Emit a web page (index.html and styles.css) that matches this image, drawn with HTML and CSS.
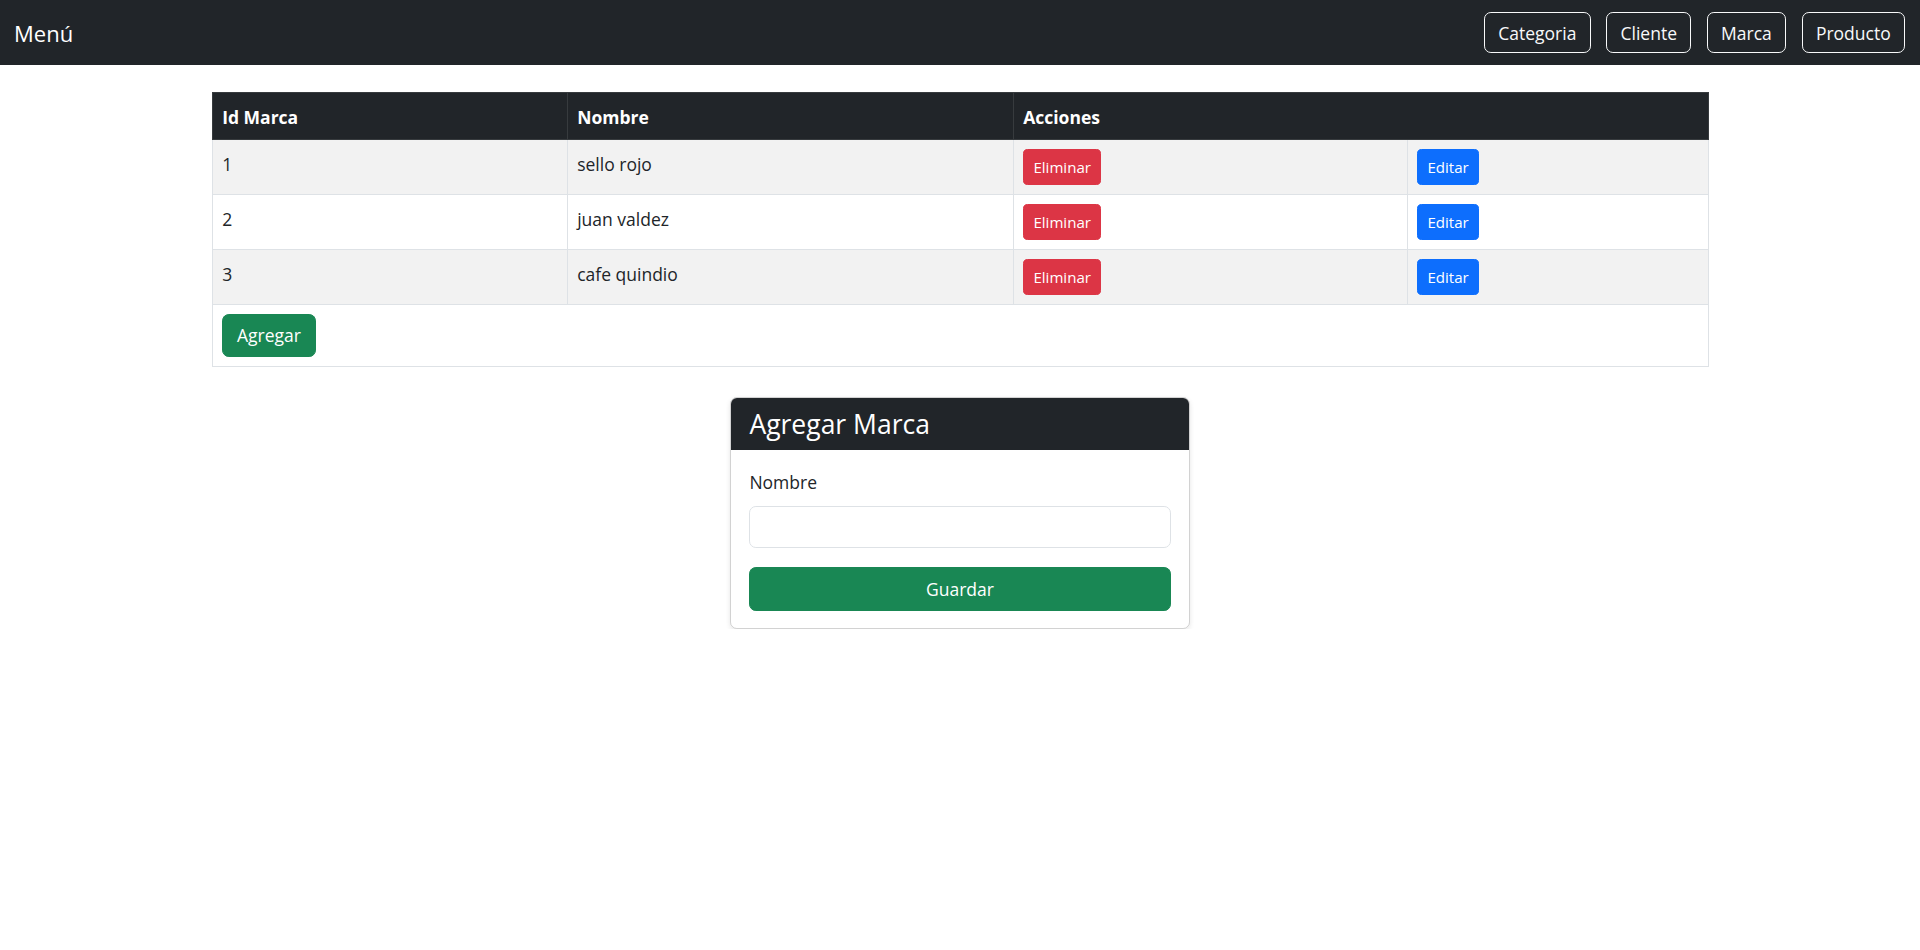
FILE: index.html
```html
<!DOCTYPE html>
<html lang="es">
<head>
<meta charset="utf-8">
<title>Marcas</title>
<link rel="stylesheet" href="styles.css">
</head>
<body>
<nav class="navbar">
  <a class="brand" href="#">Menú</a>
  <div class="nav-links">
    <a class="btn btn-outline" href="#">Categoria</a>
    <a class="btn btn-outline" href="#">Cliente</a>
    <a class="btn btn-outline" href="#">Marca</a>
    <a class="btn btn-outline" href="#">Producto</a>
  </div>
</nav>
<main class="container">
  <table class="table">
    <colgroup>
      <col class="c1"><col class="c2"><col class="c3"><col class="c4">
    </colgroup>
    <thead>
      <tr><th>Id Marca</th><th>Nombre</th><th colspan="2">Acciones</th></tr>
    </thead>
    <tbody>
      <tr class="odd"><td>1</td><td>sello rojo</td><td class="actions"><button class="btn btn-sm btn-danger">Eliminar</button></td><td class="actions"><button class="btn btn-sm btn-primary">Editar</button></td></tr>
      <tr><td>2</td><td>juan valdez</td><td class="actions"><button class="btn btn-sm btn-danger">Eliminar</button></td><td class="actions"><button class="btn btn-sm btn-primary">Editar</button></td></tr>
      <tr class="odd"><td>3</td><td>cafe quindio</td><td class="actions"><button class="btn btn-sm btn-danger">Eliminar</button></td><td class="actions"><button class="btn btn-sm btn-primary">Editar</button></td></tr>
    </tbody>
    <tfoot>
      <tr><td class="actions" colspan="4"><button class="btn btn-lg-ish btn-success">Agregar</button></td></tr>
    </tfoot>
  </table>

  <section class="card">
    <h3 class="card-header">Agregar Marca</h3>
    <form class="card-body">
      <label class="form-label" for="nombre">Nombre</label>
      <input class="form-control" id="nombre" type="text">
      <button class="btn btn-success btn-block" type="button">Guardar</button>
    </form>
  </section>
</main>
</body>
</html>
```
FILE: styles.css
```css
* { box-sizing: border-box; }
body {
  margin: 0;
  font-family: "Open Sans", "Noto Sans", sans-serif;
  font-size: 17.5px;
  line-height: 27.6px;
  color: #212529;
  background: #fff;
}
.navbar {
  background: #212529;
  height: 65px;
  display: flex;
  align-items: center;
  justify-content: space-between;
  padding: 0 15px 0 14px;
}
.brand {
  color: #fff;
  font-size: 22px;
  text-decoration: none;
  line-height: 33px;
  padding-top: 2px;
}
.nav-links {
  display: flex;
  gap: 15.5px;
}
.btn {
  display: inline-block;
  font-family: inherit;
  font-size: 17.5px;
  line-height: 27.6px;
  padding: 6.2px 13.8px;
  border: 1px solid transparent;
  border-radius: 6.9px;
  text-decoration: none;
  cursor: pointer;
}
.btn-outline {
  color: #f8f9fa;
  border-color: #f8f9fa;
  background: transparent;
  padding: 7px 13.3px 5.4px;
}
.btn-lg-ish {
  padding: 6.8px 13.8px;
}
.btn-sm {
  font-size: 15.1px;
  line-height: 24px;
  padding: 4.8px 9.2px;
  border-radius: 4.6px;
}
.btn-danger { background: #dc3545; border-color: #dc3545; color: #fff; }
.btn-primary { background: #0d6efd; border-color: #0d6efd; color: #fff; }
.btn-success { background: #198754; border-color: #198754; color: #fff; }

.container {
  width: 1496px;
  margin: 27px auto 0;
}
.table {
  width: 100%;
  border-collapse: collapse;
  table-layout: fixed;
}
.c1 { width: 355px; }
.c2 { width: 446px; }
.c3 { width: 394px; }
.c4 { width: 301px; }
.table th,
.table td {
  padding: 11.4px 9.2px 7px;
  border: 1px solid #dee2e6;
  text-align: left;
  vertical-align: top;
}
.table td.actions {
  padding: 9.2px;
}
.table th {
  background: #212529;
  color: #fff;
  font-weight: 700;
  border-color: #373b3e;
}
.table tbody tr.odd td { background: #f2f2f2; }

.card {
  width: 460px;
  margin: 30px auto 0;
  border: 1px solid rgba(0,0,0,.175);
  border-radius: 6.9px;
  box-shadow: 0 2px 5px rgba(0,0,0,.1);
  overflow: hidden;
}
.card-header {
  margin: 0;
  background: #212529;
  color: #fff;
  font-size: 26.5px;
  font-weight: 400;
  line-height: 33px;
  padding: 10px 18.4px 9px;
}
.card-body {
  padding: 19px 18.4px 17px;
  display: flex;
  flex-direction: column;
}
.form-label {
  margin-bottom: 9.4px;
}
.form-control {
  font-family: inherit;
  font-size: 17.5px;
  line-height: 27.6px;
  height: 42px;
  padding: 6.9px 13.8px;
  border: 1px solid #dee2e6;
  border-radius: 6.9px;
  margin-bottom: 19px;
}
.btn-block {
  width: 100%;
  height: 44px;
}
```
